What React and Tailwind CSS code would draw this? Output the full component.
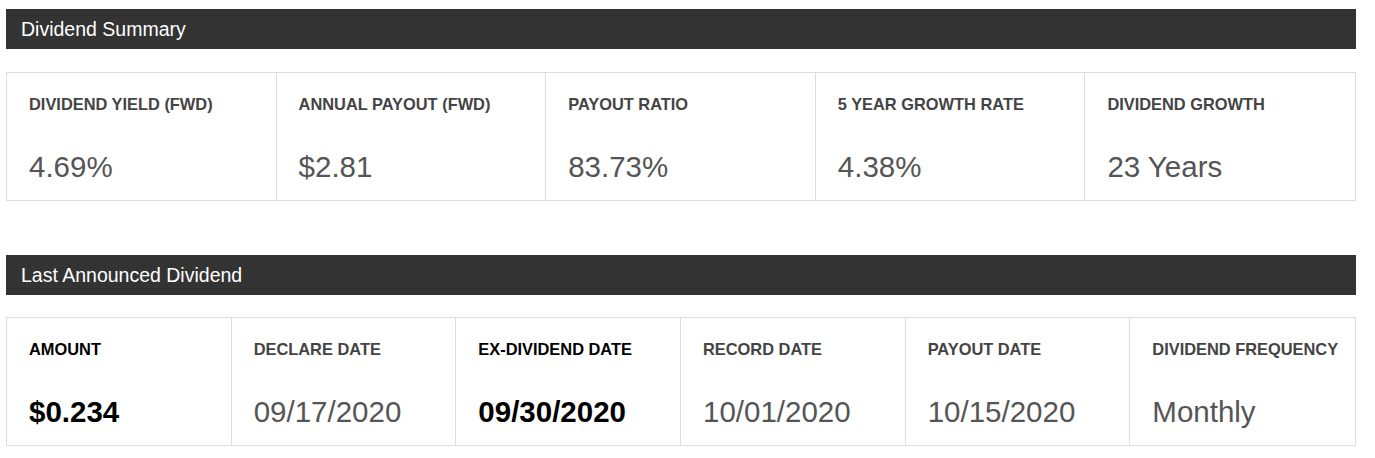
const summary = [
  { label: "DIVIDEND YIELD (FWD)", value: "4.69%" },
  { label: "ANNUAL PAYOUT (FWD)", value: "$2.81" },
  { label: "PAYOUT RATIO", value: "83.73%" },
  { label: "5 YEAR GROWTH RATE", value: "4.38%" },
  { label: "DIVIDEND GROWTH", value: "23 Years" },
]

const announced = [
  { label: "AMOUNT", value: "$0.234", strong: true },
  { label: "DECLARE DATE", value: "09/17/2020" },
  { label: "EX-DIVIDEND DATE", value: "09/30/2020", strong: true },
  { label: "RECORD DATE", value: "10/01/2020" },
  { label: "PAYOUT DATE", value: "10/15/2020" },
  { label: "DIVIDEND FREQUENCY", value: "Monthly" },
]

function SectionHeader({ title }) {
  return (
    <div className="h-10 bg-[#333333] pl-[15px] text-[19.5px] leading-10 text-white">
      {title}
    </div>
  )
}

function Cell({ label, value, strong, last }) {
  return (
    <div className={`pt-[22px] pb-[16px] pl-[22px] ${last ? "" : "border-r border-[#dddddd]"}`}>
      <div className={`text-[16.4px] font-bold leading-[18px] whitespace-nowrap ${strong ? "text-black" : "text-[#444444]"}`}>
        {label}
      </div>
      <div
        className={`mt-[37px] text-[29.5px] leading-[34px] whitespace-nowrap ${
          strong ? "font-bold text-black" : "text-[#555555]"
        }`}
      >
        {value}
      </div>
    </div>
  )
}

function StatRow({ items, cols }) {
  return (
    <div className={`grid ${cols} border border-[#dddddd]`}>
      {items.map((item, i) => (
        <Cell key={item.label} {...item} last={i === items.length - 1} />
      ))}
    </div>
  )
}

export default function App() {
  return (
    <div className="min-h-[458px] bg-white font-['Liberation_Sans',Arial,sans-serif]">
      <div className="ml-[6px] w-[1350px] pt-[9px]">
        <SectionHeader title="Dividend Summary" />
        <div className="mt-[23px]">
          <StatRow items={summary} cols="grid-cols-5" />
        </div>
        <div className="mt-[54px]">
          <SectionHeader title="Last Announced Dividend" />
        </div>
        <div className="mt-[22px]">
          <StatRow items={announced} cols="grid-cols-6" />
        </div>
      </div>
    </div>
  )
}
